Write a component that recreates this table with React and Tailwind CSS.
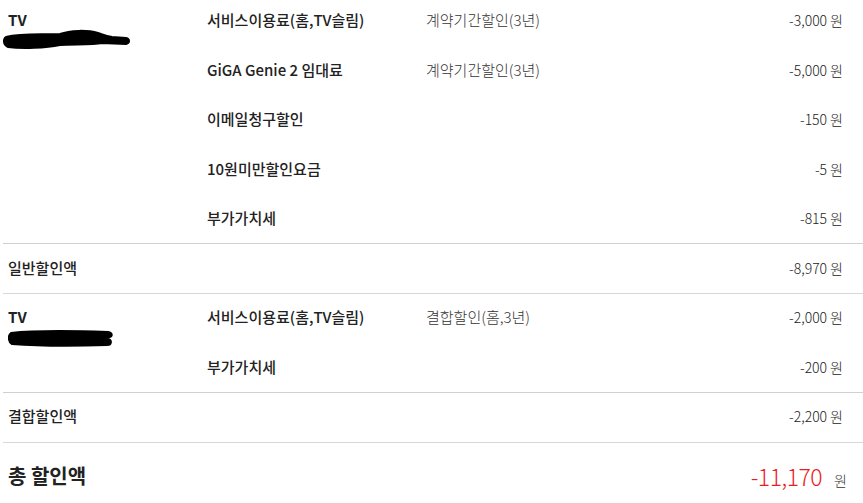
import React from 'react';

const won = (v) => (
  <span className="font-light text-[#222]">
    {v}
    <span className="ml-[3px]">원</span>
  </span>
);

const Scribble = ({ d, w, h }) => (
  <svg width={w} height={h} viewBox={`0 0 ${w} ${h}`} className="block">
    <path d={d} fill="#000" stroke="#000" strokeWidth="2" strokeLinejoin="round" />
  </svg>
);

const groups = [
  {
    offset: '-ml-[6px]',
    scribble: {
      w: 130,
      h: 22,
      d: 'M4 8 C20 4 40 6 58 5 C68 1 86 1 96 4 C102 6 104 7 110 8 L124 9 C128 10 128 14 124 15 L100 14 C90 16 70 15 58 16 C44 19 20 20 6 18 C1 16 1 10 4 8 Z',
    },
    rows: [
      { name: '서비스이용료(홈,TV슬림)', desc: '계약기간할인(3년)', amount: '-3,000' },
      { name: 'GiGA Genie 2 임대료', desc: '계약기간할인(3년)', amount: '-5,000' },
      { name: '이메일청구할인', desc: '', amount: '-150' },
      { name: '10원미만할인요금', desc: '', amount: '-5' },
      { name: '부가가치세', desc: '', amount: '-815' },
    ],
    total: { label: '일반할인액', amount: '-8,970' },
  },
  {
    offset: 'mt-[1px]',
    scribble: {
      w: 112,
      h: 22,
      d: 'M3 6 C30 3 70 4 100 5 C105 6 105 10 100 10 L90 11 L100 12 C104 13 104 18 99 18 C70 19 30 19 4 17 C0 15 0 8 3 6 Z',
    },
    rows: [
      { name: '서비스이용료(홈,TV슬림)', desc: '결합할인(홈,3년)', amount: '-2,000' },
      { name: '부가가치세', desc: '', amount: '-200' },
    ],
    total: { label: '결합할인액', amount: '-2,200' },
  },
];

export default function App() {
  return (
    <div className="w-[863px] h-[503px] overflow-hidden bg-white text-[14px] leading-[18px] text-[#222]" style={{ fontFamily: '"Noto Sans CJK KR", "Noto Sans", sans-serif' }}>
      {groups.map((g, gi) => (
        <div key={gi}>
          {/* 상품별 할인 내역 */}
          <div className={`flex pl-2 pr-5 ${gi === 0 ? 'pt-[11px]' : 'pt-[14px]'} pb-4`}>
            <div className="w-[199px] shrink-0">
              <div className="font-bold text-[15px]">TV</div>
              <div className={g.offset}>
                <Scribble {...g.scribble} />
              </div>
            </div>
            <div className={`flex-1 flex flex-col ${gi === 0 ? 'gap-[31.5px]' : 'gap-8'}`}>
              {g.rows.map((r, i) => (
                <div key={i} className="flex">
                  <div className="w-[219px] shrink-0 font-medium text-[15px]">{r.name}</div>
                  <div className="flex-1 font-light text-[15px] text-[#333]">{r.desc}</div>
                  <div className="text-right">{won(r.amount)}</div>
                </div>
              ))}
            </div>
          </div>
          <div className="ml-[3px] border-t border-[#d0d0d0]" />
          <div className={`flex justify-between pl-2 pr-5 ${gi === 0 ? 'pt-[15px] pb-4' : 'pt-[14px] pb-[17px]'}`}>
            <div className="font-medium text-[15px]">{g.total.label}</div>
            <div>{won(g.total.amount)}</div>
          </div>
          <div className="ml-[3px] border-t border-[#d8d8d8]" />
        </div>
      ))}
      {/* 총 할인액 */}
      <div className="flex justify-between items-center pl-2 pr-4 pt-[18px]">
        <div className="text-[20px] leading-[28px] font-bold">총 할인액</div>
        <div className="flex items-baseline">
          <span className="text-[23px] leading-[30px] tracking-[-0.5px] text-[#ec1c24] font-light">-11,170</span>
          <span className="ml-[12px] text-[14px] font-light text-[#333]">원</span>
        </div>
      </div>
    </div>
  );
}
